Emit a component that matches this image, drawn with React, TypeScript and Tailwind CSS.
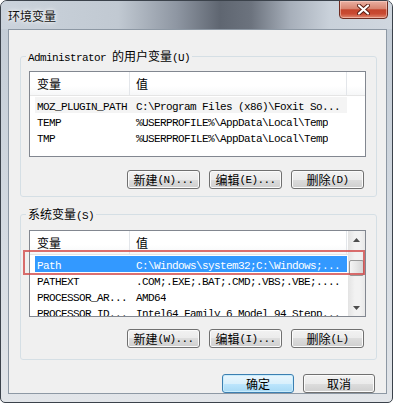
import React from 'react';

const CJK = /[\u3000-\u9fff\uff00-\uffef]/;

// SimSun-like mix: CJK runs at 12px, latin runs as 6px-wide mono
function Mixed({ text }: { text: string }) {
  const runs: { s: string; cjk: boolean }[] = [];
  for (const ch of text) {
    const cjk = CJK.test(ch);
    const last = runs[runs.length - 1];
    if (last && last.cjk === cjk) last.s += ch;
    else runs.push({ s: ch, cjk });
  }
  return (
    <>
      {runs.map((r, i) =>
        r.cjk ? (
          <span key={i} className="font-['Noto_Sans_CJK_SC',sans-serif] text-[12px]">
            {r.s}
          </span>
        ) : (
          <span key={i} className="font-['Liberation_Mono',monospace] text-[11px] tracking-[-0.6px]">
            {r.s}
          </span>
        )
      )}
    </>
  );
}

type Row = [string, string];

const userRows: Row[] = [
  ['MOZ_PLUGIN_PATH', 'C:\\Program Files (x86)\\Foxit So...'],
  ['TEMP', '%USERPROFILE%\\AppData\\Local\\Temp'],
  ['TMP', '%USERPROFILE%\\AppData\\Local\\Temp'],
];

const sysRows: Row[] = [
  ['Path', 'C:\\Windows\\system32;C:\\Windows;...'],
  ['PATHEXT', '.COM;.EXE;.BAT;.CMD;.VBS;.VBE;....'],
  ['PROCESSOR_AR...', 'AMD64'],
  ['PROCESSOR_ID...', 'Intel64 Family 6 Model 94 Stepp...'],
];

function Arrow({ down }: { down?: boolean }) {
  return (
    <svg width="7" height="4" viewBox="0 0 7 4">
      <path d={down ? 'M0 0 L3.5 4 L7 0Z' : 'M0 4 L3.5 0 L7 4Z'} fill="#4d4d4d" />
    </svg>
  );
}

function ScrollBar() {
  return (
    <div className="flex w-[17px] flex-col bg-[linear-gradient(90deg,#e3e3e3,#f2f2f2_40%,#f2f2f2_70%,#e8e8e8)]">
      <div className="flex h-[17px] items-center justify-center">
        <Arrow />
      </div>
      <div className="mx-px mt-[12px] h-[16px] rounded-[2px] border border-[#979797] bg-[linear-gradient(90deg,#f4f4f4,#e6e6e6_50%,#d6d6d6)]" />
      <div className="flex-1" />
      <div className="flex h-[17px] items-center justify-center">
        <Arrow down />
      </div>
    </div>
  );
}

function ListView({
  rows,
  height,
  scroll,
  selected,
  hot,
  marker,
}: {
  rows: Row[];
  height: string;
  scroll?: boolean;
  selected?: number;
  hot?: number;
  marker?: boolean;
}) {
  return (
    <div className={`relative flex border border-[#828790] bg-white ${height}`}>
      <div className="flex-1 overflow-hidden">
        <div className="flex h-[24px] border-b border-[#e5e5e5] bg-[linear-gradient(180deg,#ffffff,#ffffff_60%,#f6f7f8)] text-black">
          <div className="flex w-[100px] items-center border-r border-[#e3e6ea] pl-[7px]">
            <Mixed text="变量" />
          </div>
          <div className="flex w-[217px] items-center border-r border-[#e3e6ea] pl-[6px]">
            <Mixed text="值" />
          </div>
          <div className="flex-1" />
        </div>
        <div className="pt-px">
          {rows.map((r, i) => (
            <div
              key={i}
              className={`ml-[5px] flex h-[16px] w-[312px] items-center whitespace-pre leading-[16px] ${
                i === selected ? 'bg-[#3399ff] text-white' : i === hot ? 'bg-[#f4f4f4] text-black' : 'text-black'
              }`}
            >
              <div className="w-[99px] overflow-hidden pl-[2px]">
                <Mixed text={r[0]} />
              </div>
              <div className="overflow-hidden pl-[2px]">
                <Mixed text={r[1]} />
              </div>
            </div>
          ))}
        </div>
      </div>
      {scroll && <ScrollBar />}
      {marker && (
        <div className="absolute -left-[7px] top-[19px] h-[25px] w-[342px] border-2 border-[#d24b4b]/80" />
      )}
    </div>
  );
}

function Btn({ label, primary }: { label: string; primary?: boolean }) {
  return (
    <div
      className={`flex h-[19px] items-center justify-center whitespace-pre rounded-[3px] border leading-[14px] text-black ${
        primary
          ? 'border-[#3c7fb1] bg-[linear-gradient(180deg,#eaf6fd,#d9f0fc_50%,#bee6fd_50%,#a7d9f5)] shadow-[inset_0_0_0_1px_#c8ecfc]'
          : 'border-[#707070] bg-[linear-gradient(180deg,#f2f2f2,#ebebeb_50%,#dddddd_50%,#cfcfcf)] shadow-[inset_0_0_0_1px_#fbfbfb]'
      } ${label.length > 4 ? 'w-[73px]' : 'w-[72px]'}`}
    >
      <Mixed text={label} />
    </div>
  );
}

function Group({
  title,
  className,
  children,
}: {
  title: string;
  className: string;
  children: React.ReactNode;
}) {
  return (
    <fieldset className={`ml-[11px] mr-[9px] rounded-[3px] border border-[#d5dfe5] pl-[8px] pr-[10px] ${className}`}>
      <legend className="-ml-[3px] whitespace-pre px-[2px] leading-[14px] text-black">
        <Mixed text={title} />
      </legend>
      {children}
    </fieldset>
  );
}

export default function App() {
  return (
    <div className="h-[406px] w-[394px] bg-white">
      <div className="flex h-[403px] w-[393px] flex-col overflow-hidden rounded-t-[7px] rounded-b-[5px] border border-[#3b424b] bg-[linear-gradient(180deg,#c2cbd5,#d5dbe2_60%,#e2e5e9)]">
        {/* title bar */}
        <div className="flex h-[28px] items-start bg-[linear-gradient(90deg,#cbd3dc_0%,#c1c9d2_30%,#8e96a2_45%,#5f6671_56%,#6c737e_64%,#a7afba_74%,#c9d1da_84%,#d0d7df_100%)]">
          <span className="ml-[7px] mt-[7px] font-['Noto_Sans_CJK_SC',sans-serif] text-[12px] leading-[16px] text-[#111] [text-shadow:0_0_6px_#ffffff,0_0_3px_#ffffff]">
            环境变量
          </span>
          <div className="-mt-px ml-auto mr-[4px] flex h-[19px] w-[49px] items-center justify-center rounded-b-[4px] border border-[#6e2b20] bg-[linear-gradient(180deg,#eab0a2,#d88571_45%,#c4452d_52%,#c94a32_75%,#e08a72)] shadow-[inset_0_0_0_1px_rgba(255,220,210,0.5)]">
            <svg width="13" height="11" viewBox="0 0 13 11">
              <path d="M2 1.5 L11 9.5 M11 1.5 L2 9.5" stroke="#5a1d12" strokeWidth="4" strokeLinecap="round" />
              <path d="M2 1.5 L11 9.5 M11 1.5 L2 9.5" stroke="#ffffff" strokeWidth="2.2" strokeLinecap="round" />
            </svg>
          </div>
        </div>

        {/* frame body */}
        <div className="flex flex-1 flex-col pb-[8px] pl-[7px] pr-[5px]">
          <div className="flex flex-1 flex-col border border-[#8d98a4] bg-[#f0f0f0]">
            <Group title="Administrator 的用户变量(U)" className="mt-[18px] pb-[7px] pt-[6px]">
              <ListView rows={userRows} height="h-[86px]" hot={0} />
              <div className="mr-[2px] mt-[13px] flex justify-end gap-[9px]">
                <Btn label="新建(N)..." />
                <Btn label="编辑(E)..." />
                <Btn label="删除(D)" />
              </div>
            </Group>

            <Group title="系统变量(S)" className="mt-[9px] pb-[11px] pt-[7px]">
              <ListView rows={sysRows} height="h-[87px]" scroll selected={0} marker />
              <div className="mr-[2px] mt-[12px] flex justify-end gap-[9px]">
                <Btn label="新建(W)..." />
                <Btn label="编辑(I)..." />
                <Btn label="删除(L)" />
              </div>
            </Group>

            <div className="mr-[11px] mt-[14px] flex justify-end gap-[9px]">
              <Btn label="确定" primary />
              <Btn label="取消" />
            </div>
          </div>
        </div>
      </div>
    </div>
  );
}
